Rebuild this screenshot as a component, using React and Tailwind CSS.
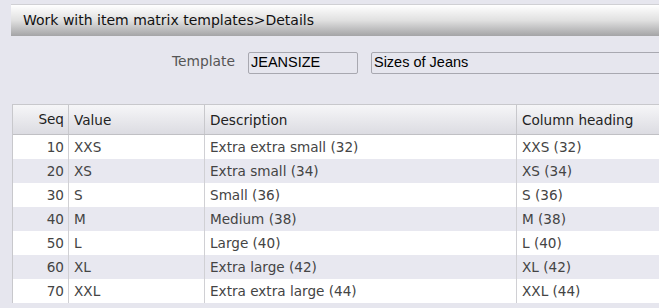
const rows = [
  { seq: 10, value: 'XXS', desc: 'Extra extra small (32)', head: 'XXS (32)' },
  { seq: 20, value: 'XS', desc: 'Extra small (34)', head: 'XS (34)' },
  { seq: 30, value: 'S', desc: 'Small (36)', head: 'S (36)' },
  { seq: 40, value: 'M', desc: 'Medium (38)', head: 'M (38)' },
  { seq: 50, value: 'L', desc: 'Large (40)', head: 'L (40)' },
  { seq: 60, value: 'XL', desc: 'Extra large (42)', head: 'XL (42)' },
  { seq: 70, value: 'XXL', desc: 'Extra extra large (44)', head: 'XXL (44)' },
]

const App = () => {
  return (
    <div className="h-[308px] w-[659px] overflow-hidden bg-[#e6e6ee] font-['DejaVu_Sans',sans-serif]">
      <div className="pl-[11px] pt-[4px]">
        <div className="flex h-[32px] w-[700px] items-center border-t border-[#d0d0d4] bg-gradient-to-b from-[#ffffff] via-[#e0e0e0] to-[#a4a4a6] pl-[12px] text-[14px] text-[#111]">
          Work with item matrix templates&gt;Details
        </div>
      </div>

      <div className="mt-[16px] flex h-[22px] items-center pl-[172px]">
        <span className="mr-[13px] shrink-0 pb-[4px] text-[13.8px] text-[#555]">Template</span>
        <div className="flex h-[22px] w-[110px] shrink-0 items-center rounded-[2px] border border-[#a8a8b0] pl-[2px] font-['Liberation_Sans',sans-serif] text-[14.5px] text-black">
          JEANSIZE
        </div>
        <div className="ml-[13px] flex h-[22px] w-[340px] shrink-0 items-center rounded-[2px] border border-[#a8a8b0] pl-[2px] font-['Liberation_Sans',sans-serif] text-[14.5px] text-black">
          Sizes of Jeans
        </div>
      </div>

      <div className="ml-[12px] mt-[30px] w-[700px] border-l border-t border-[#c8c8cc] text-[13.6px]">
        <div className="flex h-[30px] items-center border-b border-[#c0c0c4] bg-gradient-to-b from-[#f6f6f8] to-[#dcdce2] text-[#222]">
          <div className="w-[55px] pr-[4px] text-right">Seq</div>
          <div className="h-full w-[136px] border-l border-[#c8c8cc] pl-[5px] leading-[30px]">Value</div>
          <div className="h-full w-[312px] border-l border-[#c8c8cc] pl-[5px] leading-[30px]">Description</div>
          <div className="h-full flex-1 border-l border-[#c8c8cc] pl-[5px] leading-[30px]">Column heading</div>
        </div>
        {rows.map((row, i) => (
          <div
            key={row.seq}
            className={`flex h-[24px] items-center text-[#444] ${i % 2 === 1 ? 'bg-[#e8e8f0]' : 'bg-white'}`}
          >
            <div className="w-[55px] pr-[4px] text-right">{row.seq}</div>
            <div className="h-full w-[136px] border-l border-[#d0d0d4] pl-[5px] leading-[24px]">{row.value}</div>
            <div className="h-full w-[312px] border-l border-[#d0d0d4] pl-[5px] leading-[24px]">{row.desc}</div>
            <div className="h-full flex-1 border-l border-[#d0d0d4] pl-[5px] leading-[24px]">{row.head}</div>
          </div>
        ))}
      </div>
    </div>
  )
}

export default App
